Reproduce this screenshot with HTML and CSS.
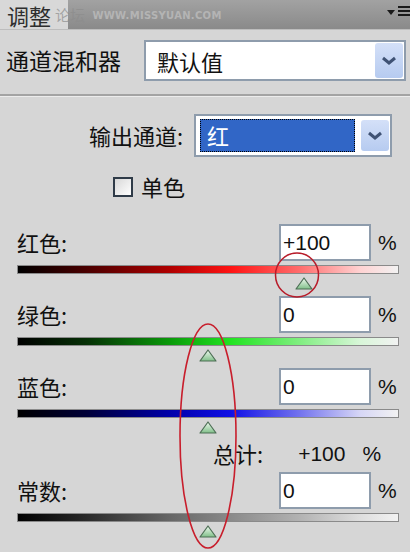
FILE: index.html
```html
<!DOCTYPE html>
<html lang="zh-CN">
<head>
    <meta charset="UTF-8">
    <meta name="viewport" content="width=device-width, initial-scale=1.0">
    <title>调整 - 通道混和器</title>
    <link rel="stylesheet" href="styles.css">
</head>
<body>
    <div class="panel">
        <div class="titlebar">
            <div class="tab"><span class="tab-text">调整</span></div>
            <div class="watermark">论坛 <span>WWW.MISSYUAN.COM</span></div>
            <div class="menu-btn">
                <span class="menu-arrow"></span>
                <span class="menu-lines"><i></i><i></i><i></i></span>
            </div>
        </div>

        <div class="preset-row">
            <span class="label">通道混和器</span>
            <div class="select preset-select">
                <span class="select-text">默认值</span>
                <span class="select-btn">
                    <svg width="16" height="10" viewBox="0 0 16 10"><path d="M2 2 L8 7 L14 2" fill="none" stroke="#3f5274" stroke-width="3"/></svg>
                </span>
            </div>
        </div>
        <div class="divider"></div>

        <div class="output-row">
            <span class="label">输出通道:</span>
            <div class="select output-select">
                <span class="select-highlight">红</span>
                <span class="select-btn">
                    <svg width="16" height="10" viewBox="0 0 16 10"><path d="M2 2 L8 7 L14 2" fill="none" stroke="#3f5274" stroke-width="3"/></svg>
                </span>
            </div>
        </div>

        <div class="mono-row">
            <span class="checkbox"></span>
            <span class="label">单色</span>
        </div>

        <div class="channel first">
            <div class="field-row">
                <span class="label">红色:</span>
                <div class="input">+100</div>
                <span class="pct">%</span>
            </div>
            <div class="track">
                <div class="bar red"></div>
                <div class="thumb" style="left: 75%">
                    <svg width="18" height="13" viewBox="0 0 18 13"><defs><linearGradient id="tg1" x1="0" y1="0" x2="0" y2="1"><stop offset="0" stop-color="#f2fbf2"/><stop offset="1" stop-color="#7fbf88"/></linearGradient></defs><path d="M9 1 L17 12 L1 12 Z" fill="url(#tg1)" stroke="#4d6e55" stroke-width="1.2" stroke-linejoin="round"/></svg>
                </div>
            </div>
        </div>

        <div class="channel">
            <div class="field-row">
                <span class="label">绿色:</span>
                <div class="input">0</div>
                <span class="pct">%</span>
            </div>
            <div class="track">
                <div class="bar green"></div>
                <div class="thumb" style="left: 50%">
                    <svg width="18" height="13" viewBox="0 0 18 13"><path d="M9 1 L17 12 L1 12 Z" fill="url(#tg1)" stroke="#4d6e55" stroke-width="1.2" stroke-linejoin="round"/></svg>
                </div>
            </div>
        </div>

        <div class="channel">
            <div class="field-row">
                <span class="label">蓝色:</span>
                <div class="input">0</div>
                <span class="pct">%</span>
            </div>
            <div class="track">
                <div class="bar blue"></div>
                <div class="thumb" style="left: 50%">
                    <svg width="18" height="13" viewBox="0 0 18 13"><path d="M9 1 L17 12 L1 12 Z" fill="url(#tg1)" stroke="#4d6e55" stroke-width="1.2" stroke-linejoin="round"/></svg>
                </div>
            </div>
        </div>

        <div class="total-row">
            <span class="label">总计:</span>
            <span class="total-value">+100</span>
            <span class="total-pct">%</span>
        </div>

        <div class="channel last">
            <div class="field-row">
                <span class="label">常数:</span>
                <div class="input">0</div>
                <span class="pct">%</span>
            </div>
            <div class="track">
                <div class="bar gray"></div>
                <div class="thumb" style="left: 50%">
                    <svg width="18" height="13" viewBox="0 0 18 13"><path d="M9 1 L17 12 L1 12 Z" fill="url(#tg1)" stroke="#4d6e55" stroke-width="1.2" stroke-linejoin="round"/></svg>
                </div>
            </div>
        </div>

        <svg class="marks" width="410" height="552" viewBox="0 0 410 552">
            <ellipse cx="297" cy="275" rx="21.5" ry="22" fill="none" stroke="#b81c2a" stroke-width="1.5"/>
            <ellipse cx="208" cy="436" rx="28" ry="112" fill="none" stroke="#c81e2c" stroke-width="1.6"/>
        </svg>
    </div>
</body>
</html>
```

FILE: styles.css
```css
body {
    margin: 0;
    padding: 0;
    background-color: #d6d6d6;
    font-family: "Noto Sans CJK SC", "Liberation Sans", sans-serif;
    color: #111;
}

.panel {
    position: relative;
    width: 410px;
    height: 552px;
    overflow: hidden;
    background-color: #d6d6d6;
}

.label {
    font-size: 22px;
    line-height: 1.1;
    white-space: nowrap;
}

/* title bar */
.titlebar {
    display: flex;
    align-items: stretch;
    height: 30px;
    background: linear-gradient(#a2a2a2, #8a8a8a);
    border-bottom: 1px solid #bdbdbd;
    box-sizing: border-box;
}

.tab {
    display: flex;
    align-items: center;
    width: 68px;
    flex-shrink: 0;
    background-color: #d8d8d8;
    padding-left: 7px;
    box-sizing: border-box;
}

.tab-text {
    font-size: 22px;
    line-height: 26px;
    color: #2e2e2e;
}

.watermark {
    margin-left: -13px;
    padding-top: 5px;
    font-size: 15px;
    line-height: 20px;
    white-space: nowrap;
    color: rgba(140, 140, 140, 0.7);
}

.watermark span {
    font-family: "DejaVu Sans", sans-serif;
    font-size: 10px;
    font-weight: bold;
    letter-spacing: 0.3px;
    color: #b4b4b4;
    margin-left: 4px;
    vertical-align: 2px;
}

.menu-btn {
    margin-left: auto;
    display: flex;
    align-items: flex-start;
    padding-top: 6px;
}

.menu-arrow {
    width: 0;
    height: 0;
    border-left: 4px solid transparent;
    border-right: 4px solid transparent;
    border-top: 5px solid #1a1a1a;
    margin-top: 4px;
    margin-right: 3px;
}

.menu-lines {
    display: flex;
    flex-direction: column;
    gap: 2px;
    width: 12px;
}

.menu-lines i {
    display: block;
    height: 2px;
    background: #1a1a1a;
}

/* selects */
.select {
    display: flex;
    align-items: center;
    background: #fff;
    border: 2px solid #8e9cac;
    box-sizing: border-box;
}

.select-btn {
    display: flex;
    align-items: center;
    justify-content: center;
    width: 28px;
    align-self: stretch;
    margin: 1px;
    background: linear-gradient(#d4e0f8, #b6cbf0);
    border-radius: 3px;
}

.preset-row {
    display: flex;
    align-items: center;
    height: 64px;
    padding: 10px 4px 13px 6px;
    box-sizing: border-box;
}

.preset-row .label {
    font-size: 23px;
}

.preset-select {
    margin-left: auto;
    width: 262px;
    height: 41px;
}

.select-text {
    flex: 1;
    font-size: 22px;
    padding-left: 11px;
}

.divider {
    height: 2px;
    background: #a3a3a3;
    border-bottom: 1px solid #ececec;
}

.output-row {
    display: flex;
    align-items: center;
    justify-content: flex-end;
    gap: 11px;
    margin-top: 17px;
    padding-right: 18px;
}

.output-select {
    width: 198px;
    height: 43px;
    padding: 3px 0 3px 4px;
}

.select-highlight {
    flex: 1;
    align-self: stretch;
    margin-right: 5px;
    background: #3166c6;
    border: 1px dotted #000;
    color: #fff;
    font-size: 22px;
    line-height: 31px;
    padding-left: 6px;
}

.mono-row {
    display: flex;
    align-items: center;
    gap: 8px;
    margin-top: 19px;
    padding-left: 113px;
    height: 21px;
}

.checkbox {
    width: 20px;
    height: 20px;
    box-sizing: border-box;
    border: 2px solid #2f3b48;
    background: linear-gradient(135deg, #d8d8d8, #ffffff);
}

/* channel sliders */
.channel {
    padding: 0 11px 0 17px;
    margin-bottom: 5px;
}

.channel.first {
    margin-top: 27px;
}

.field-row {
    display: flex;
    align-items: center;
    height: 37px;
}

.field-row .label {
    flex: 1;
}

.input {
    width: 92px;
    height: 37px;
    box-sizing: border-box;
    border: 2px solid #8e9cac;
    background: #fff;
    font-family: "Liberation Sans", Arial, sans-serif;
    font-size: 21px;
    line-height: 33px;
    padding-left: 2px;
}

.pct {
    width: 21px;
    margin-left: 7px;
    font-family: "Liberation Sans", Arial, sans-serif;
    font-size: 21px;
}

.track {
    position: relative;
    margin-top: 4px;
    height: 26px;
}

.bar {
    height: 9px;
    box-sizing: border-box;
    border: 1px solid #8a8a8a;
}

.bar.red {
    background: linear-gradient(to right, #000 0%, #4a0000 18%, #b00000 40%, #ff1414 56%, #ff6c6c 74%, #ffd2d2 90%, #f2f2f2 100%);
}

.bar.green {
    background: linear-gradient(to right, #000 0%, #063006 18%, #0a9a0a 40%, #22e422 56%, #80ee80 74%, #d8f6d8 90%, #f2f2f2 100%);
}

.bar.blue {
    background: linear-gradient(to right, #000 0%, #000038 18%, #0000aa 40%, #1010e6 56%, #7272ee 74%, #d6d6f6 90%, #f2f2f2 100%);
}

.bar.gray {
    background: linear-gradient(to right, #000 0%, #2a2a2a 18%, #666 40%, #8a8a8a 56%, #b2b2b2 74%, #dedede 90%, #f2f2f2 100%);
}

.thumb {
    position: absolute;
    top: 12px;
    width: 18px;
    height: 13px;
    margin-left: -9px;
}

.thumb svg {
    display: block;
}

.total-row {
    display: flex;
    align-items: center;
    height: 37px;
    padding-left: 213px;
    margin-top: -5px;
    font-family: "Liberation Sans", "Noto Sans CJK SC", sans-serif;
    font-size: 21px;
}

.total-row .label {
    font-family: "Noto Sans CJK SC", sans-serif;
}

.total-value {
    margin-left: 35px;
}

.total-pct {
    margin-left: 17px;
}

.channel.last {
    margin-bottom: 0;
}

.marks {
    position: absolute;
    left: 0;
    top: 0;
    pointer-events: none;
}
```
